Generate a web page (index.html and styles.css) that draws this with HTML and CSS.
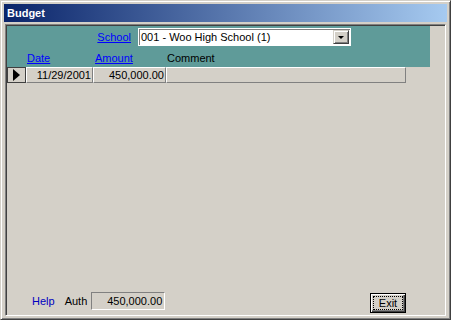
FILE: index.html
```html
<!DOCTYPE html>
<html lang="en">
<head>
  <meta charset="UTF-8" />
  <title>Budget</title>
  <link rel="stylesheet" href="styles.css">
</head>
<body>
  <div class="window">
    <div class="titlebar">Budget</div>
    <div class="client">
      <!-- Form header -->
      <div class="header-panel">
        <div class="school-row">
          <a class="link school-label" href="#">School</a>
          <div class="combo">
            <span class="combo-text">001 - Woo High School (1)</span>
            <span class="combo-btn"><span class="arrow-down"></span></span>
          </div>
        </div>
        <div class="cols col-heads">
          <span></span>
          <a class="link" href="#">Date</a>
          <a class="link" href="#">Amount</a>
          <span class="head">Comment</span>
        </div>
      </div>
      <!-- Detail rows -->
      <div class="cols data-row">
        <div class="cell selector"><span class="arrow-right"></span></div>
        <div class="cell num">11/29/2001</div>
        <div class="cell num">450,000.00</div>
        <div class="cell"></div>
      </div>
      <!-- Footer -->
      <div class="footer">
        <span class="help">Help</span>
        <span class="auth-label">Auth</span>
        <div class="auth-box">450,000.00</div>
        <button class="exit-btn"><span class="focus">Exit</span></button>
      </div>
    </div>
  </div>
</body>
</html>
```

FILE: styles.css
```css
body {
  margin: 0;
  background: #d4d0c8;
  font-family: 'Liberation Sans', Arial, sans-serif;
  font-size: 11px;
  color: #000;
}
/* Window frame */
.window {
  width: 451px;
  height: 320px;
  box-sizing: border-box;
  background: #d4d0c8;
  border: 1px solid;
  border-color: #d4d0c8 #404040 #404040 #d4d0c8;
  box-shadow: inset 1px 1px #fff, inset -1px -1px #808080;
  padding: 3px;
  display: flex;
  flex-direction: column;
}
.titlebar {
  height: 18px;
  line-height: 18px;
  padding-left: 3px;
  background: linear-gradient(90deg, #0a246a 0%, #a6caf0 100%);
  color: #fff;
  font-weight: 700;
  font-size: 11px;
}
.client {
  flex: 1;
  margin: 2px 1px 0 1px;
  border: 1px solid;
  border-color: #808080 #fff #fff #808080;
  box-shadow: inset 1px 1px #404040, inset -1px -1px #d4d0c8;
  padding: 1px;
  display: flex;
  flex-direction: column;
}
.link {
  color: #0000ff;
  text-decoration: underline;
}
/* Header panel */
.header-panel {
  width: 423px;
  height: 41px;
  background: #5f9b99;
}
.school-row {
  display: flex;
  align-items: center;
  padding-top: 2px;
  height: 18px;
}
.school-label {
  width: 124px;
  text-align: right;
  margin-right: 7px;
}
.combo {
  width: 213px;
  height: 18px;
  box-sizing: border-box;
  background: #fff;
  border: 1px solid #fff;
  box-shadow: inset 1px 1px #808080;
  display: flex;
  align-items: center;
  justify-content: space-between;
}
.combo-text {
  padding-left: 2px;
}
.combo-btn {
  width: 16px;
  height: 14px;
  box-sizing: border-box;
  margin-right: 1px;
  background: #d4d0c8;
  border: 1px solid;
  border-color: #d4d0c8 #404040 #404040 #d4d0c8;
  box-shadow: inset 1px 1px #fff, inset -1px -1px #808080;
  display: flex;
  align-items: center;
  justify-content: center;
}
.arrow-down {
  width: 0;
  height: 0;
  border-top: 3px solid #000;
  border-left: 3px solid transparent;
  border-right: 3px solid transparent;
}
.cols {
  display: grid;
  grid-template-columns: 19px 67px 73px 240px;
}
.col-heads {
  padding-top: 6px;
  line-height: 13px;
}
.col-heads > * {
  padding-left: 1px;
}
.col-heads > .link:nth-child(3) {
  padding-left: 2px;
}
/* Datasheet row */
.data-row {
  height: 16px;
}
.cell {
  box-sizing: border-box;
  height: 16px;
  line-height: 14px;
  background: #d4d0c8;
  border: 1px solid;
  border-color: #fff #808080 #808080 #fff;
}
.num {
  text-align: right;
  padding-right: 1px;
}
.selector {
  border-color: #404040;
  display: flex;
  align-items: center;
  justify-content: center;
}
.arrow-right {
  width: 0;
  height: 0;
  border-left: 7px solid #000;
  border-top: 6px solid transparent;
  border-bottom: 6px solid transparent;
}
/* Footer */
.footer {
  margin-top: auto;
  margin-bottom: 1px;
  height: 21px;
  display: flex;
  align-items: flex-start;
}
.help {
  margin-left: 25px;
  line-height: 18px;
  color: #0000c0;
}
.auth-label {
  margin-left: 10px;
  line-height: 18px;
}
.auth-box {
  margin-left: 4px;
  width: 74px;
  height: 18px;
  box-sizing: border-box;
  border: 1px solid;
  border-color: #808080 #fff #fff #808080;
  text-align: right;
  padding-right: 2px;
  line-height: 16px;
}
.exit-btn {
  margin: 1px 38px 0 auto;
  width: 36px;
  height: 20px;
  padding: 2px;
  box-sizing: border-box;
  font-family: inherit;
  font-size: 11px;
  background: #d4d0c8;
  border: 1px solid #000;
  box-shadow: inset 1px 1px #fff, inset -1px -1px #404040, inset -2px -2px #808080;
  display: flex;
}
.focus {
  flex: 1;
  border: 1px dotted #000;
  line-height: 12px;
  text-align: center;
}
```
